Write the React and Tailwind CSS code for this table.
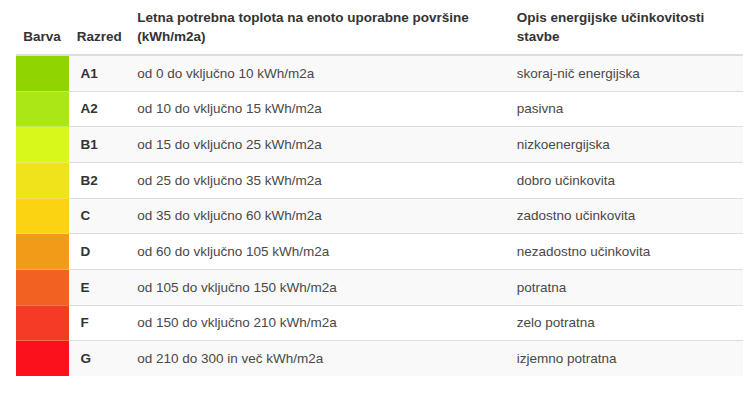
import React from 'react';

const rows = [
  { cls: 'A1', color: 'bg-[#91d500]', range: 'od 0 do vključno 10 kWh/m2a', desc: 'skoraj-nič energijska' },
  { cls: 'A2', color: 'bg-[#a9e815]', range: 'od 10 do vključno 15 kWh/m2a', desc: 'pasivna' },
  { cls: 'B1', color: 'bg-[#d8f81b]', range: 'od 15 do vključno 25 kWh/m2a', desc: 'nizkoenergijska' },
  { cls: 'B2', color: 'bg-[#efe31b]', range: 'od 25 do vključno 35 kWh/m2a', desc: 'dobro učinkovita' },
  { cls: 'C', color: 'bg-[#fbd311]', range: 'od 35 do vključno 60 kWh/m2a', desc: 'zadostno učinkovita' },
  { cls: 'D', color: 'bg-[#f29b19]', range: 'od 60 do vključno 105 kWh/m2a', desc: 'nezadostno učinkovita' },
  { cls: 'E', color: 'bg-[#f36122]', range: 'od 105 do vključno 150 kWh/m2a', desc: 'potratna' },
  { cls: 'F', color: 'bg-[#f33b25]', range: 'od 150 do vključno 210 kWh/m2a', desc: 'zelo potratna' },
  { cls: 'G', color: 'bg-[#fa111b]', range: 'od 210 do 300 in več kWh/m2a', desc: 'izjemno potratna' },
];

const App = () => {
  return (
    <div className="w-[750px] h-[404px] bg-white font-[family-name:'Liberation_Sans',Arial,sans-serif] text-[13.5px] leading-[19.3px]">
      <table className="ml-[15.5px] w-[727.5px] table-fixed border-collapse">
        <colgroup>
          <col className="w-[53.5px]" />
          <col className="w-[60.5px]" />
          <col className="w-[379.5px]" />
          <col className="w-[234px]" />
        </colgroup>
        <thead>
          {/* Header */}
          <tr>
            <th className="px-[7.7px] py-[7.7px] text-left align-bottom font-bold text-[#333] border-b-2 border-[#dddddd]">Barva</th>
            <th className="px-[7.7px] py-[7.7px] text-left align-bottom font-bold text-[#333] border-b-2 border-[#dddddd]">Razred</th>
            <th className="px-[7.7px] py-[7.7px] text-left align-bottom font-bold text-[#333] border-b-2 border-[#dddddd]">
              Letna potrebna toplota na enoto uporabne površine (kWh/m2a)
            </th>
            <th className="px-[7.7px] py-[7.7px] text-left align-bottom font-bold text-[#333] border-b-2 border-[#dddddd]">
              Opis energijske učinkovitosti stavbe
            </th>
          </tr>
        </thead>
        <tbody>
          {rows.map((row, i) => (
            <tr key={row.cls} className={i % 2 === 0 ? 'bg-[#f9f9f9]' : 'bg-white'}>
              <td className={`${row.color} h-[35.6px] p-0 border-t border-white/25`}></td>
              <td className="h-[35.6px] pl-[11.5px] pr-[7.7px] py-[7.7px] font-bold text-[#333] border-t border-[#dddddd]">{row.cls}</td>
              <td className="h-[35.6px] px-[7.7px] py-[7.7px] text-[#484848] border-t border-[#dddddd]">{row.range}</td>
              <td className="h-[35.6px] px-[7.7px] py-[7.7px] text-[#484848] border-t border-[#dddddd]">{row.desc}</td>
            </tr>
          ))}
        </tbody>
      </table>
    </div>
  );
};

export default App;
